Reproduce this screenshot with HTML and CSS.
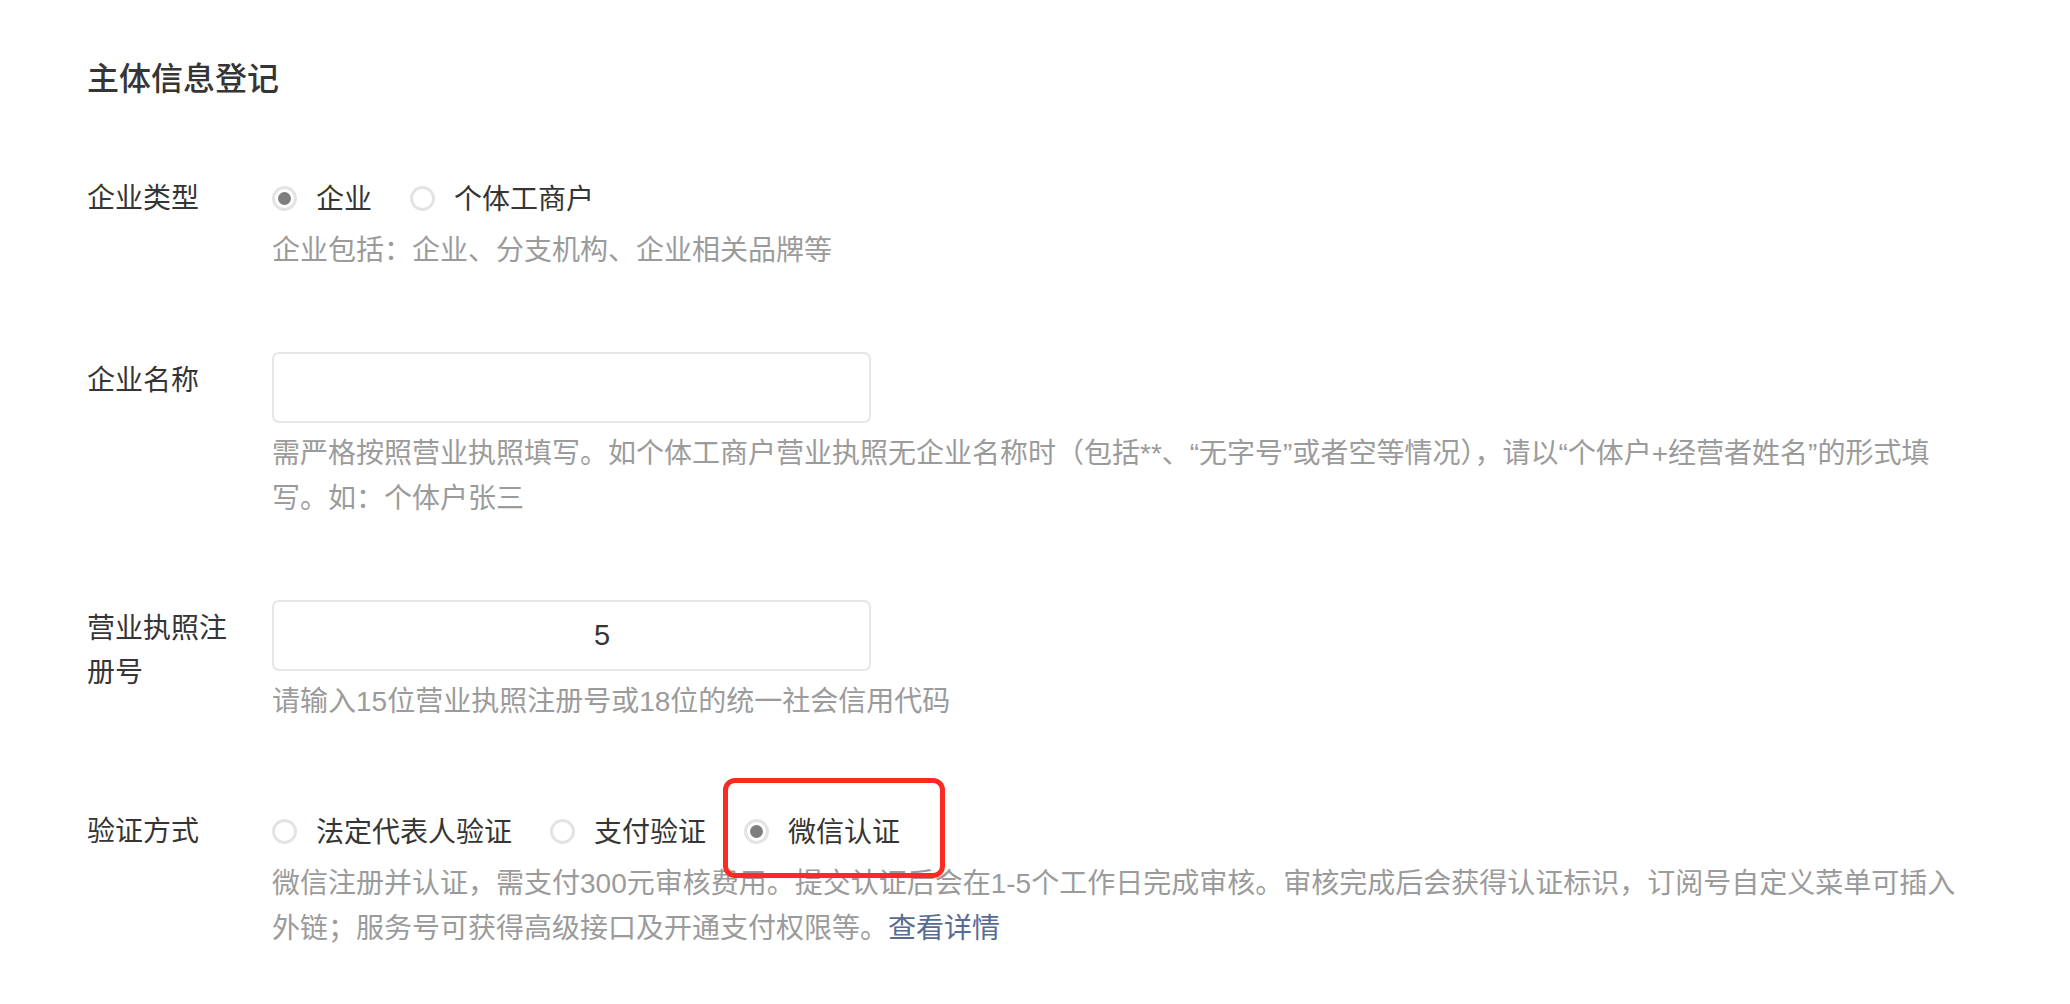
FILE: index.html
```html
<!DOCTYPE html>
<html lang="zh-CN">
<head>
<meta charset="utf-8">
<title>主体信息登记</title>
<link rel="stylesheet" href="styles.css">
</head>
<body>
<div class="page">
  <h2 class="title">主体信息登记</h2>
  <div class="form">
    <div class="row">
      <div class="label">企业类型</div>
      <div class="field">
        <div class="radios">
          <label class="radio checked"><span class="dot"></span><span class="rtext">企业</span></label>
          <label class="radio"><span class="dot"></span><span class="rtext">个体工商户</span></label>
        </div>
        <p class="hint">企业包括：企业、分支机构、企业相关品牌等</p>
      </div>
    </div>

    <div class="row">
      <div class="label">企业名称</div>
      <div class="field">
        <div class="input"></div>
        <p class="hint">需严格按照营业执照填写。如个体工商户营业执照无企业名称时（包括**、“无字号”或者空等情况），请以“个体户+经营者姓名”的形式填写。如：个体户张三</p>
      </div>
    </div>

    <div class="row">
      <div class="label">营业执照注册号</div>
      <div class="field">
        <div class="input"><span class="value">5</span></div>
        <p class="hint">请输入15位营业执照注册号或18位的统一社会信用代码</p>
      </div>
    </div>

    <div class="row">
      <div class="label">验证方式</div>
      <div class="field">
        <div class="radios">
          <label class="radio"><span class="dot"></span><span class="rtext">法定代表人验证</span></label>
          <label class="radio"><span class="dot"></span><span class="rtext">支付验证</span></label>
          <label class="radio checked marked"><span class="dot"></span><span class="rtext">微信认证</span><span class="highlight"></span></label>
        </div>
        <p class="hint">微信注册并认证，需支付300元审核费用。提交认证后会在1-5个工作日完成审核。审核完成后会获得认证标识，订阅号自定义菜单可插入外链；服务号可获得高级接口及开通支付权限等。<a class="link" href="#">查看详情</a></p>
      </div>
    </div>
  </div>
</div>
</body>
</html>
```

FILE: styles.css
```css
* { box-sizing: border-box; }

html, body {
  margin: 0;
  padding: 0;
  background: #ffffff;
}

body {
  font-family: "Liberation Sans", "Noto Sans CJK SC", sans-serif;
  color: #353535;
  font-size: 28px;
}

.page {
  padding: 57px 0 0 87px;
}

.title {
  margin: 0;
  font-size: 32px;
  font-weight: 500;
  line-height: 45px;
  color: #353535;
}

.form {
  margin-top: 68px;
  display: flex;
  flex-direction: column;
  gap: 79px;
}

.row {
  display: flex;
  align-items: flex-start;
}

.label {
  flex: none;
  width: 155px;
  margin-right: 30px;
  padding-top: 7px;
  line-height: 44px;
  color: #353535;
}

.field {
  flex: none;
  width: 1700px;
}

.radios {
  display: flex;
  align-items: center;
  height: 58px;
  gap: 38px;
}

.radio {
  position: relative;
  display: flex;
  align-items: center;
  height: 58px;
  gap: 19px;
}

.dot {
  flex: none;
  width: 25px;
  height: 25px;
  margin-top: -2px;
  border-radius: 50%;
  border: 3px solid #e3e3e6;
  display: flex;
  align-items: center;
  justify-content: center;
}

.radio.checked .dot::after {
  content: "";
  width: 13px;
  height: 13px;
  border-radius: 50%;
  background: #7e7e7e;
}

.rtext {
  line-height: 45px;
  color: #353535;
}

.highlight {
  position: absolute;
  left: -21px;
  top: -25px;
  width: 222px;
  height: 100px;
  border: 5px solid #fc2a20;
  border-radius: 12px;
  pointer-events: none;
}

.input {
  width: 599px;
  height: 71px;
  border: 2px solid #e6e6ea;
  border-radius: 7px;
  display: flex;
  align-items: center;
}

.value {
  margin-left: 320px;
  font-size: 29px;
  color: #353535;
}

.hint {
  margin: 0;
  line-height: 45px;
  color: #9b9b9b;
}

.input + .hint {
  margin-top: 8px;
}

.link {
  color: #576b95;
  text-decoration: none;
}
```
